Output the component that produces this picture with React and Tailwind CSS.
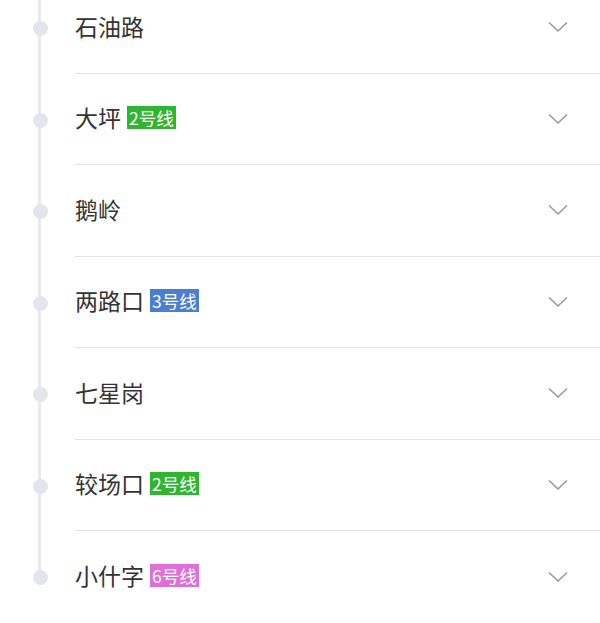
import React from "react";

const stations = [
  { name: "石油路" },
  { name: "大坪", line: "2号线", color: "bg-[#2fb52f]" },
  { name: "鹅岭" },
  { name: "两路口", line: "3号线", color: "bg-[#4a7ed0]" },
  { name: "七星岗" },
  { name: "较场口", line: "2号线", color: "bg-[#2fb52f]" },
  { name: "小什字", line: "6号线", color: "bg-[#e070d8]" },
];

function Chevron() {
  return (
    <svg width="20" height="12" viewBox="0 0 20 12" fill="none">
      <path d="M1 1.5 L10 10 L19 1.5" stroke="#9a9a9a" strokeWidth="1.6" />
    </svg>
  );
}

export default function App() {
  return (
    <div
      className="w-[600px] h-[623px] overflow-hidden bg-white"
      style={{ fontFamily: '"Noto Sans CJK SC", "Noto Sans", sans-serif' }}
    >
      <div className="-mt-[18px]">
        {stations.map((s, i) => (
          <div key={i} className="flex h-[91.5px]">
            {/* timeline */}
            <div className="relative w-[75px] shrink-0">
              <div
                className={`absolute left-[38px] w-[3px] bg-[#e8e8ee] top-0 ${
                  i === stations.length - 1 ? "h-[46px]" : "bottom-0"
                }`}
              />
              <div className="absolute left-[33px] top-[39px] w-[15px] h-[15px] rounded-full bg-[#e4e4eb]" />
            </div>
            <div
              className={`flex-1 flex items-center pr-[32px] ${
                i === stations.length - 1 ? "" : "border-b border-[#e2e2e2]"
              }`}
            >
              <div className="flex-1 flex items-center gap-[6px] -mt-[2px]">
                <span className="text-[23px] leading-none text-[#333]">{s.name}</span>
                {s.line && (
                  <span
                    className={`${s.color} text-white text-[17.5px] leading-[23px] h-[23px] px-[2px]`}
                  >
                    {s.line}
                  </span>
                )}
              </div>
              <Chevron />
            </div>
          </div>
        ))}
      </div>
    </div>
  );
}
